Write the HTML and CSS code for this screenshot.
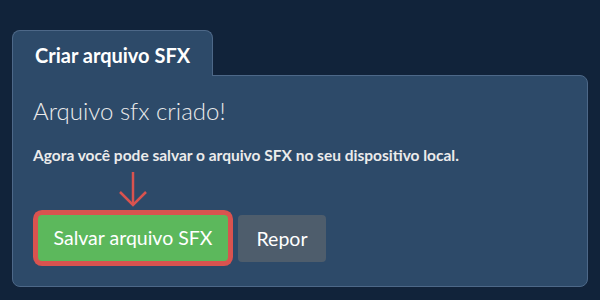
FILE: index.html
```html
<!DOCTYPE html>
<html lang="pt">
<head>
    <meta charset="UTF-8">
    <meta name="viewport" content="width=device-width, initial-scale=1.0">
    <title>Criar arquivo SFX</title>
    <link rel="stylesheet" href="styles.css">
</head>
<body>
    <div class="container">
        <!-- Tab header -->
        <div class="tab">Criar arquivo SFX</div>

        <!-- Tab content -->
        <div class="panel">
            <h1>Arquivo sfx criado!</h1>
            <p class="info">Agora você pode salvar o arquivo SFX no seu dispositivo local.</p>

            <div class="arrow-row">
                <svg class="arrow" width="30" height="36" viewBox="0 0 30 36">
                    <line x1="15" y1="1" x2="15" y2="34" />
                    <polyline points="2,21 15,34 28,21" />
                </svg>
            </div>

            <div class="actions">
                <button class="btn btn-save">Salvar arquivo SFX</button>
                <button class="btn btn-reset">Repor</button>
            </div>
        </div>
    </div>
</body>
</html>
```

FILE: styles.css
```css
/* General styling */
* {
    margin: 0;
    padding: 0;
    box-sizing: border-box;
}
body {
    font-family: 'Lato', 'Liberation Sans', sans-serif;
    background: #11233a;
    color: #fff;
}
.container {
    padding: 30px 12px 0 12px;
    width: 600px;
}
.tab {
    display: inline-block;
    position: relative;
    z-index: 1;
    margin-bottom: -1px;
    padding: 12px 22px 9px 22px;
    font-size: 20px;
    line-height: 24px;
    font-weight: 700;
    color: #fff;
    background: #2d4a69;
    border: 1px solid #4d6888;
    border-bottom: none;
    border-radius: 8px 8px 0 0;
}
.panel {
    width: 576px;
    padding: 20px 20px 24px 20px;
    background: #2d4a69;
    border: 1px solid #4d6888;
    border-radius: 0 8px 8px 8px;
}
h1 {
    font-size: 24px;
    line-height: 29px;
    font-weight: 300;
    color: #ebebeb;
}
.info {
    margin-top: 21px;
    font-size: 15.5px;
    line-height: 19px;
    font-weight: 700;
    color: #ebebeb;
}
.arrow-row {
    width: 190px;
    margin: 6px 0 7px 5px;
    height: 37px;
    display: flex;
    justify-content: center;
}
.arrow line,
.arrow polyline {
    fill: none;
    stroke: #d9534f;
    stroke-width: 2.5;
}
.actions {
    display: flex;
    gap: 10px;
    padding-left: 5px;
}
.btn {
    font-family: 'Lato', 'Liberation Sans', sans-serif;
    font-size: 19.5px;
    line-height: 26px;
    padding: 10px 0;
    height: 46px;
    color: #fff;
    border: none;
    border-radius: 4px;
}
.btn-save {
    width: 190px;
    background: #5cb85c;
    box-shadow: 0 0 0 5px #d9534f;
}
.btn-reset {
    width: 88px;
    height: 47px;
    background: #4e5d6c;
}
```
